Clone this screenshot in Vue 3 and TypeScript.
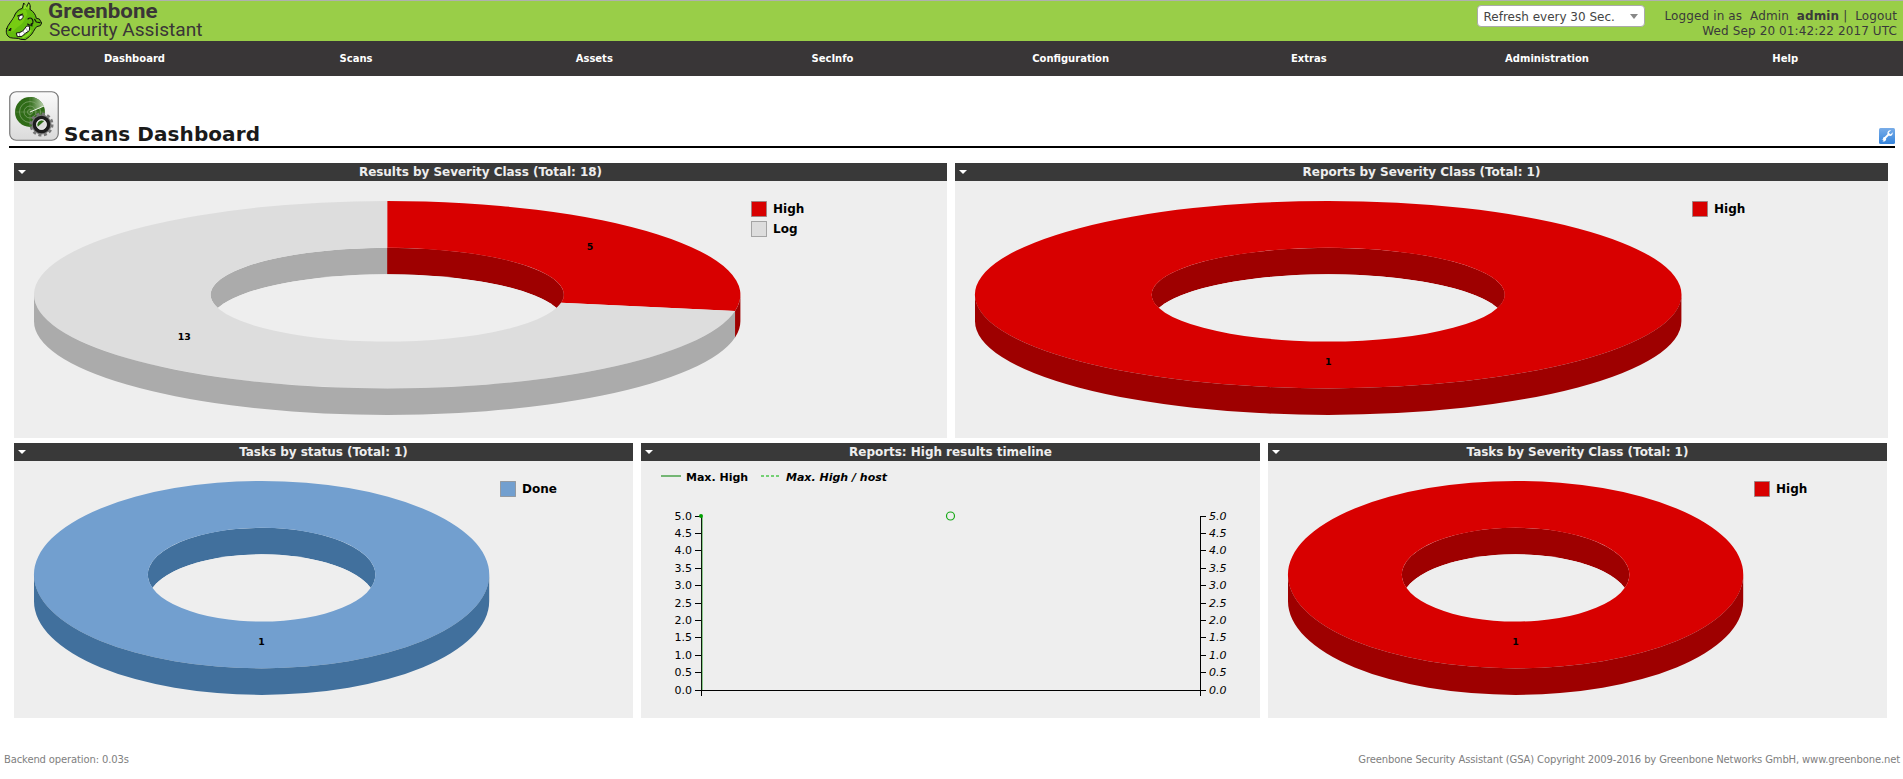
<script setup lang="ts">
interface Slice { label: string; value: number; face: string; wall: string }
interface Panel { title: string; width: number; slices?: Slice[] }

const red = { face: '#d80000', wall: '#9e0000' }
const gray = { face: '#dddddd', wall: '#ababab' }
const blue = { face: '#729fcf', wall: '#41709d' }

const menu = ['Dashboard', 'Scans', 'Assets', 'SecInfo', 'Configuration', 'Extras', 'Administration', 'Help']

const rows: Panel[][] = [
  [
    {
      title: 'Results by Severity Class (Total: 18)',
      width: 933,
      slices: [
        { label: 'High', value: 5, ...red },
        { label: 'Log', value: 13, ...gray },
      ],
    },
    { title: 'Reports by Severity Class (Total: 1)', width: 933, slices: [{ label: 'High', value: 1, ...red }] },
  ],
  [
    { title: 'Tasks by status (Total: 1)', width: 619, slices: [{ label: 'Done', value: 1, ...blue }] },
    { title: 'Reports: High results timeline', width: 619 },
    { title: 'Tasks by Severity Class (Total: 1)', width: 619, slices: [{ label: 'High', value: 1, ...red }] },
  ],
]

const CY = 113.7
const RY = 93.7
const DEPTH = 26.5

// Builds the visible surfaces of a tilted ring; angles run clockwise from the top.
function donut(panel: Panel) {
  const slices = panel.slices ?? []
  const cx = panel.width * 0.4
  const rx = cx - 20
  const irx = rx / 2
  const iry = RY / 2
  const total = slices.reduce((sum, s) => sum + s.value, 0)
  const pt = (a: number, x: number, y: number, dy = 0) =>
    `${(cx + x * Math.sin(a)).toFixed(2)} ${(CY + dy - y * Math.cos(a)).toFixed(2)}`
  const cut = Math.asin(DEPTH / 2 / iry)
  const right = Math.PI / 2 + cut
  const left = (Math.PI * 3) / 2 - cut
  const faces: { d: string; fill: string }[] = []
  const outer: { d: string; fill: string }[] = []
  const inner: { d: string; fill: string }[] = []
  const labels: { x: number; y: number; text: number }[] = []

  // The back wall of the hole: the last slice fills it, the first one covers its right half.
  const last = slices[slices.length - 1]
  inner.push({
    fill: last.wall,
    d: `M${pt(left, irx, iry)} A${irx} ${iry} 0 1 1 ${pt(right, irx, iry)} A${irx} ${iry} 0 0 0 ${pt(left, irx, iry)}Z`,
  })
  if (slices.length > 1) {
    inner.push({
      fill: slices[0].wall,
      d: `M${pt(0, irx, iry)} A${irx} ${iry} 0 0 1 ${pt(right, irx, iry)} A${irx} ${iry} 0 0 0 ${pt(0, irx, iry, DEPTH)}Z`,
    })
  }

  let a = 0
  for (const s of slices) {
    const b = a + (s.value / total) * Math.PI * 2
    const mid = (a + b) / 2
    const big = mid - a > Math.PI / 2 ? 1 : 0
    if (slices.length === 1) {
      faces.push({
        fill: s.face,
        d: `M${pt(0, rx, RY)} A${rx} ${RY} 0 1 1 ${pt(Math.PI, rx, RY)} A${rx} ${RY} 0 1 1 ${pt(0, rx, RY)}Z
            M${pt(0, irx, iry)} A${irx} ${iry} 0 1 0 ${pt(Math.PI, irx, iry)} A${irx} ${iry} 0 1 0 ${pt(0, irx, iry)}Z`,
      })
    } else {
      faces.push({
        fill: s.face,
        d: `M${pt(a, rx, RY)} A${rx} ${RY} 0 ${big} 1 ${pt(b, rx, RY)} L${pt(b, irx, iry)} A${irx} ${iry} 0 ${big} 0 ${pt(a, irx, iry)}Z`,
      })
    }
    const o1 = Math.max(a, Math.PI / 2)
    const o2 = Math.min(b, (Math.PI * 3) / 2)
    if (o2 > o1) {
      outer.push({
        fill: s.wall,
        d: `M${pt(o1, rx, RY)} A${rx} ${RY} 0 0 1 ${pt(o2, rx, RY)} L${pt(o2, rx, RY, DEPTH)} A${rx} ${RY} 0 0 0 ${pt(o1, rx, RY, DEPTH)}Z`,
      })
    }
    labels.push({ x: cx + rx * 0.75 * Math.sin(mid), y: CY - RY * 0.75 * Math.cos(mid), text: s.value })
    a = b
  }
  return { faces, outer, inner, labels, legendX: Math.round(cx * 2 - 9.4) + 0.5, slices }
}

const charts = rows.map(row => row.map(panel => ({ ...panel, chart: panel.slices ? donut(panel) : null })))

const ticks = Array.from({ length: 11 }, (_, i) => ({ text: (5 - i * 0.5).toFixed(1), y: 55 + i * 17.4 }))
</script>

<template>
  <div class="page">
    <header class="top">
      <svg class="logo" width="210" height="40" viewBox="0 0 210 40">
        <g transform="translate(0 -1) scale(.3333)" stroke-linejoin="round" stroke-linecap="round">
          <path d="M20 86C24 73 35 64 42 51C46 38 54 28 67 25L71 9L80 20L86 8C91 13 92 21 90 28C101 35 107 44 109 55L118 57L125 69L121 77L110 80C102 88 100 100 88 110L76 119L62 118C55 113 42 116 31 113C19 108 17 96 20 86Z" fill="#62bb0e" stroke="#111" stroke-width="3" />
          <path d="M25 82C35 66 42 50 54 38L68 30L78 30L82 43L72 62C65 76 50 80 42 92L28 97Z" fill="#77cc12" />
          <path d="M73 25L75 15L79 25M84 27L86 15" fill="none" stroke="#98df31" stroke-width="4" />
          <path d="M56 53C57 46 65 43 70 47C69 55 65 60 58 60Z" fill="#fff" stroke="#111" stroke-width="3" />
          <path d="M53 48L68 42M84 57C90 51 98 55 99 64C100 75 89 79 83 72M104 58L109 66L120 68M94 71L96 78" fill="none" stroke="#111" stroke-width="3.5" />
          <path d="M50 99C62 98 67 94 72 89L80 78L89 79L88 92L76 100L66 109L53 110Z" fill="#fff" stroke="#111" stroke-width="3" />
          <path d="M58 100L59 108M69 94L74 101M79 86L83 94" stroke="#555" stroke-width="1.5" />
          <path d="M27 90L33 84L32 91Z" fill="#111" stroke="#111" stroke-width="3" />
          <path d="M69 112C79 109 87 102 92 92" fill="none" stroke="#8ada27" stroke-width="5" />
        </g>
        <text class="brand" x="48" y="16.6" textLength="109.5" lengthAdjust="spacingAndGlyphs">Greenbone</text>
        <text class="product" x="49" y="34.7" textLength="153.5" lengthAdjust="spacingAndGlyphs">Security Assistant</text>
      </svg>
      <div class="session">
        <div class="select">
          <span>Refresh every 30 Sec.</span>
          <svg width="8" height="5" viewBox="0 0 8 5"><path d="M0 0H8L4 5Z" fill="#888" /></svg>
        </div>
        <div class="user">
          <div>Logged in as&nbsp; Admin&nbsp; <b>admin</b> |&nbsp; Logout</div>
          <div>Wed Sep 20 01:42:22 2017 UTC</div>
        </div>
      </div>
    </header>

    <nav class="menu">
      <a v-for="item in menu" :key="item">{{ item }}</a>
    </nav>

    <div class="heading">
      <svg width="50" height="50" viewBox="0 0 50 50">
        <defs>
          <linearGradient id="tile" x1="0" y1="0" x2="0" y2="1"><stop offset="0" stop-color="#fafafa" /><stop offset="1" stop-color="#dadada" /></linearGradient>
          <linearGradient id="beam" x1="0" y1="0" x2="1" y2="0"><stop offset="0" stop-color="#2f6b17" /><stop offset="1" stop-color="#bcd3b0" /></linearGradient>
        </defs>
        <rect x=".75" y=".75" width="48.5" height="48.5" rx="6.5" fill="url(#tile)" stroke="#777" stroke-width="1.2" />
        <circle cx="21" cy="21" r="15" fill="#2f6b17" />
        <path d="M21 21L21 6A15 15 0 0 1 35 15Z" fill="url(#beam)" />
        <g fill="none" stroke="#7fa36c" stroke-width=".8"><circle cx="21" cy="21" r="10.5" /><circle cx="21" cy="21" r="6" /><circle cx="21" cy="21" r="2.5" /><path d="M21 6V36M6 21H36" opacity=".5" /></g>
        <path d="M21 21L35 15" stroke="#eaf3e5" />
        <circle cx="32.5" cy="33.5" r="10.8" fill="none" stroke="#777" stroke-width="2.4" stroke-dasharray="3.1 2.55" />
        <circle cx="32.5" cy="33.5" r="10" fill="#777" />
        <circle cx="32.5" cy="33.5" r="7" fill="#ddd" stroke="#1d1d1d" stroke-width="3.6" />
        <path d="M28.5 36A5 5 0 0 1 35.5 29.8Z" fill="#2f6b17" />
        <circle cx="32.5" cy="33.5" r="4.8" fill="none" stroke="#eee" stroke-width="1" />
      </svg>
      <h1>Scans Dashboard</h1>
      <svg class="edit" width="16" height="16" viewBox="0 0 16 16">
        <defs><linearGradient id="edit" x1="0" y1="0" x2="0" y2="1"><stop offset="0" stop-color="#79ade8" /><stop offset="1" stop-color="#3484dc" /></linearGradient></defs>
        <rect width="16" height="16" rx="1.5" fill="url(#edit)" />
        <path d="M4.5 11.5L10.5 5.5" stroke="#fff" stroke-width="1.8" />
        <path d="M12 2.4L9.8 4.2L10 6L11.8 6.2L13.7 4.3C14 7 12.2 8.4 10.2 7.8L8.5 6.1C8 4 9.4 2 12 2.4ZM2.4 11.4L4.2 11.6L4.5 9.2C6.3 8.7 7.6 10.2 7.1 11.8C6.5 13.6 4.5 13.9 3.4 13.2L4.8 12.6Z" fill="#fff" />
      </svg>
    </div>

    <main class="dashboard">
      <div v-for="(row, r) in charts" :key="r" class="row">
        <section v-for="panel in row" :key="panel.title" class="panel">
          <div class="panel-head">
            <svg width="8" height="4" viewBox="0 0 8 4"><path d="M0 0H8L4 4Z" fill="#fff" /></svg>
            <h2>{{ panel.title }}</h2>
          </div>
          <svg class="chart" :width="panel.width" height="257" :viewBox="`0 0 ${panel.width} 257`">
            <g v-if="panel.chart">
              <path v-for="(p, i) in panel.chart.inner" :key="'i' + i" :d="p.d" :fill="p.fill" />
              <ellipse
                :cx="panel.width * 0.4" :cy="CY + DEPTH" :rx="panel.width * 0.2 - 10" :ry="RY / 2"
                fill="#eee" :clip-path="`url(#hole-${panel.width})`"
              />
              <clipPath :id="`hole-${panel.width}`">
                <ellipse :cx="panel.width * 0.4" :cy="CY" :rx="panel.width * 0.2 - 10" :ry="RY / 2" />
              </clipPath>
              <path v-for="(p, i) in panel.chart.faces" :key="'f' + i" :d="p.d" :fill="p.fill" />
              <path v-for="(p, i) in panel.chart.outer" :key="'o' + i" :d="p.d" :fill="p.fill" />
              <text v-for="(l, i) in panel.chart.labels" :key="'l' + i" class="value" :x="l.x" :y="l.y">{{ l.text }}</text>
              <g v-for="(s, i) in panel.chart.slices" :key="s.label">
                <rect :x="panel.chart.legendX" :y="20.5 + i * 20" width="15" height="15" :fill="s.face" class="swatch" />
                <text class="legend" :x="panel.chart.legendX + 21.5" :y="32 + i * 20">{{ s.label }}</text>
              </g>
            </g>
            <g v-else>
              <path d="M20 15H40" stroke="#74b674" stroke-width="2" />
              <text class="series" x="45" y="20">Max. High</text>
              <path d="M120 15H138" stroke="#74d074" stroke-width="2" stroke-dasharray="3 2" />
              <text class="series italic" x="145" y="20">Max. High / host</text>
              <g class="axis">
                <path d="M60.5 55V235M559.5 55V235M54 229.5H565" />
                <g v-for="t in ticks" :key="t.text">
                  <path :d="`M54 ${Math.floor(t.y) + 0.5}H60M560 ${Math.floor(t.y) + 0.5}H565`" />
                  <text x="51" :y="t.y + 3.5" text-anchor="end">{{ t.text }}</text>
                  <text x="568" :y="t.y + 3.5" class="italic">{{ t.text }}</text>
                </g>
              </g>
              <path d="M61.3 56V229" stroke="#54b454" stroke-width=".8" />
              <circle cx="60" cy="55" r="2" fill="#00a000" />
              <circle cx="309.5" cy="55" r="4" fill="none" stroke="#16a916" stroke-width="1.2" />
            </g>
          </svg>
        </section>
      </div>
    </main>

    <footer class="footer">
      <span>Backend operation: 0.03s</span>
      <span>Greenbone Security Assistant (GSA) Copyright 2009-2016 by Greenbone Networks GmbH, www.greenbone.net</span>
    </footer>
  </div>
</template>

<style>
html, body { margin: 0; background: #fff; }
</style>

<style scoped>
.page { height: 779px; display: flex; flex-direction: column; overflow: hidden; font-family: "DejaVu Sans", sans-serif; font-size: 12px; }
.top { height: 40px; border-top: 1px solid #b0b0b0; background: #99ce48; display: flex; justify-content: space-between; color: #3a3a3a; }
.logo { display: block; overflow: visible; }
.brand { font: 700 19.4px Roboto, sans-serif; fill: #3a3637; }
.product { font: 400 18px Roboto, sans-serif; fill: #3a3637; }
.session { display: flex; align-items: flex-start; gap: 20px; padding-right: 6px; }
.select { box-sizing: border-box; width: 168px; height: 22px; margin-top: 4px; padding: 1px 6px 0; display: flex; align-items: center; justify-content: space-between; border: 1px solid #aaa; border-radius: 4px; background: #fff; color: #444; }
.user { padding-top: 8px; line-height: 15px; text-align: right; white-space: nowrap; letter-spacing: .12px; }
.menu { height: 35px; background: #393637; display: flex; }
.menu a { box-sizing: border-box; flex: 0 0 238.2px; text-align: center; line-height: 36px; color: #fff; font-size: 10px; font-weight: 700; }
.menu a:first-child { flex-basis: 237px; padding-left: 32px; }
.heading { height: 55px; margin: 15px 8px 0 9px; border-bottom: 2px solid #000; display: flex; align-items: flex-start; }
.heading h1 { margin: 31px 0 0 5px; font-size: 20px; line-height: 24px; letter-spacing: .08px; color: #1a1a1a; }
.edit { margin: 37px 0 0 auto; }
.dashboard { margin: 15px 0 0 14px; display: flex; flex-direction: column; gap: 5px; }
.row { display: flex; gap: 8px; }
.panel { background: #eee; }
.panel-head { height: 18px; background: #393939; display: flex; align-items: center; padding: 0 12px 0 4px; }
.panel-head h2 { flex: 1; margin: 0; text-align: center; font-size: 12px; line-height: 18px; letter-spacing: -.03px; color: #eee; }
.chart { display: block; }
.value { font-size: 9.4px; font-weight: 700; text-anchor: middle; }
.legend { font-size: 12px; font-weight: 700; }
.swatch { stroke: #888; stroke-opacity: .7; stroke-width: 1; }
.series { font-size: 11px; font-weight: 700; }
.italic { font-style: italic; }
.axis { font-size: 11px; }
.axis path { stroke: #000; fill: none; }
.footer { margin: 35px 3px 0 4px; display: flex; justify-content: space-between; font-size: 10px; line-height: 14px; letter-spacing: -.135px; color: #808080; }
</style>
